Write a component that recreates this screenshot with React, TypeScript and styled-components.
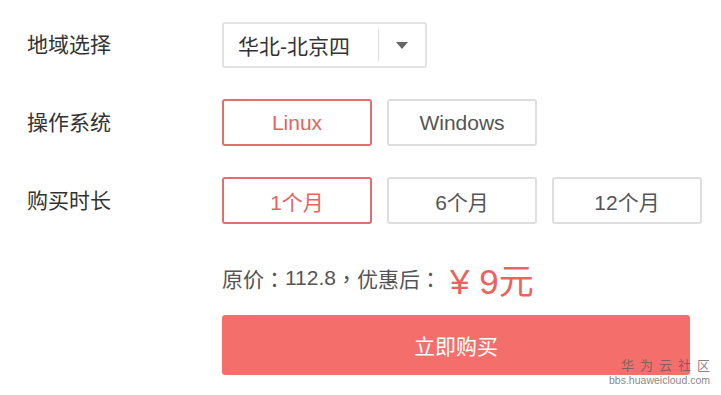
import React, { useState } from "react";
import styled, { createGlobalStyle } from "styled-components";

const Global = createGlobalStyle`
  html, body { margin: 0; padding: 0; background: #fff; }
  body { font-family: "Liberation Sans", "Noto Sans CJK SC", sans-serif; }
`;

const Page = styled.div`
  position: relative;
  width: 721px;
  height: 395px;
  overflow: hidden;
  box-sizing: border-box;
  padding: 22px 0 0 27px;
`;

const Form = styled.div`
  display: grid;
  grid-template-columns: 195px auto;
  row-gap: 31px;
  align-items: center;
  justify-items: start;
`;

const Label = styled.div`
  font-size: 21px;
  color: #333;
  line-height: 24px;
`;

const Select = styled.div`
  width: 205px;
  height: 46px;
  box-sizing: border-box;
  border: 2px solid #e2e2e2;
  border-radius: 3px;
  display: flex;
  align-items: center;
`;

const SelectText = styled.div`
  flex: 1;
  padding-left: 14px;
  font-size: 21px;
  color: #333;
`;

const Divider = styled.div`
  width: 1px;
  height: 32px;
  background: #dcdcdc;
`;

const Arrow = styled.div`
  width: 46px;
  display: flex;
  align-items: center;
  justify-content: center;
`;

const Options = styled.div`
  display: flex;
  gap: 15px;
`;

const Option = styled.button<{ $active?: boolean }>`
  flex: 0 0 auto;
  width: 150px;
  height: 47px;
  box-sizing: border-box;
  border: 2px solid ${(p) => (p.$active ? "#e0706b" : "#dedede")};
  border-radius: 3px;
  background: #fff;
  color: ${(p) => (p.$active ? "#e8625b" : "#555")};
  font-family: inherit;
  font-size: 21px;
  padding: 0;
  cursor: pointer;
`;

const PriceRow = styled.div`
  grid-column: 2;
  height: 46px;
  display: flex;
  align-items: center;
  color: #555;
  font-size: 21px;
  white-space: pre;
`;

const Punct = styled.span`
  font-family: "Noto Sans CJK TC", sans-serif;
`;

const Price = styled.span`
  color: #ec625c;
  font-size: 35px;
  margin-left: 9px;
`;

const BuyButton = styled.button`
  grid-column: 2;
  margin-top: -17px;
  width: 468px;
  height: 60px;
  border: none;
  border-radius: 3px;
  background: #f46f6b;
  color: #fff;
  font-family: inherit;
  font-size: 21px;
  cursor: pointer;
`;

const Watermark = styled.div`
  position: absolute;
  right: 11px;
  bottom: 10px;
  text-align: right;
  color: rgba(90, 90, 90, 0.75);
  line-height: 1;
`;

const WmTitle = styled.div`
  font-size: 13px;
  letter-spacing: 6px;
  margin-right: -6px;
`;

const WmUrl = styled.div`
  font-size: 10.5px;
  margin-top: 3px;
  color: rgba(110, 110, 110, 0.85);
`;

export default function App() {
  const [os, setOs] = useState("Linux");
  const [dur, setDur] = useState("1个月");
  return (
    <Page>
      <Global />
      <Form>
        <Label>地域选择</Label>
        <Select>
          <SelectText>华北-北京四</SelectText>
          <Divider />
          <Arrow>
            <svg width="12" height="7" viewBox="0 0 12 7">
              <path d="M0 0 L12 0 L6 7 Z" fill="#666" />
            </svg>
          </Arrow>
        </Select>

        <Label>操作系统</Label>
        <Options>
          {["Linux", "Windows"].map((o) => (
            <Option key={o} $active={os === o} onClick={() => setOs(o)}>
              {o}
            </Option>
          ))}
        </Options>

        <Label>购买时长</Label>
        <Options>
          {["1个月", "6个月", "12个月"].map((o) => (
            <Option key={o} $active={dur === o} onClick={() => setDur(o)}>
              {o}
            </Option>
          ))}
        </Options>

        <PriceRow>
          原价<Punct>：</Punct>112.8<Punct>，</Punct>优惠后<Punct>：</Punct>
          <Price>¥ 9元</Price>
        </PriceRow>
        <BuyButton>立即购买</BuyButton>
      </Form>
      <Watermark>
        <WmTitle>华为云社区</WmTitle>
        <WmUrl>bbs.huaweicloud.com</WmUrl>
      </Watermark>
    </Page>
  );
}
